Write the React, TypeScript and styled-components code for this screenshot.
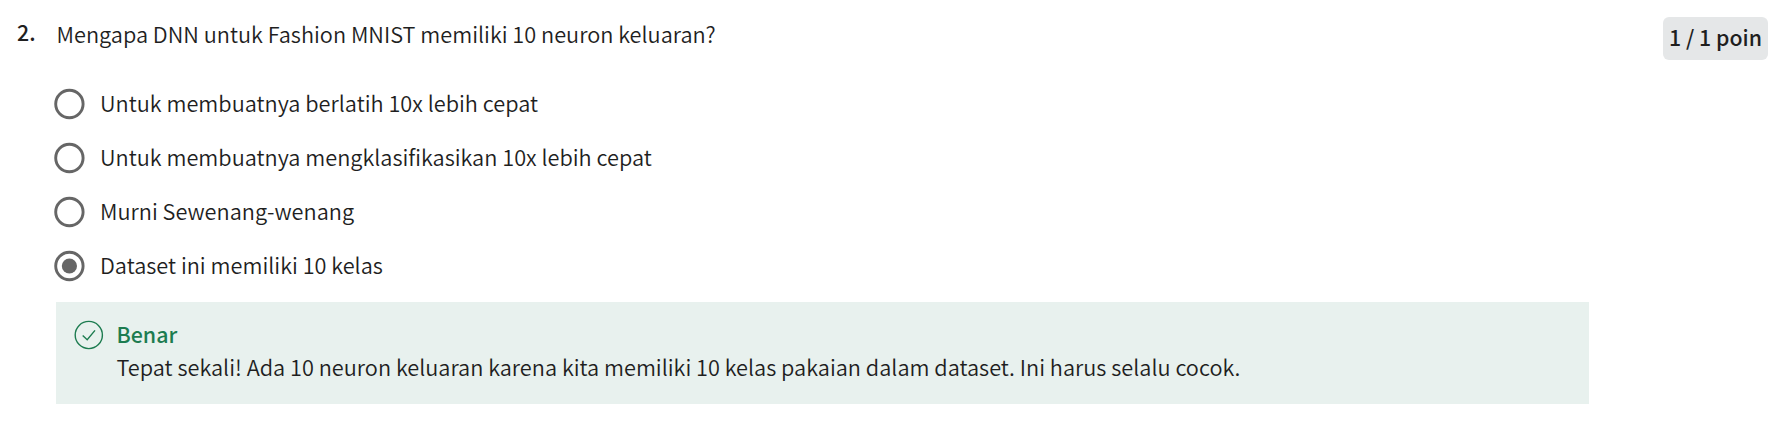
import React from "react";
import styled, { createGlobalStyle } from "styled-components";

const GlobalStyle = createGlobalStyle`
  * { box-sizing: border-box; }
  body {
    margin: 0;
    background: #fff;
    color: #1f1f1f;
    font-family: "Source Sans Pro", "Noto Sans CJK SC", sans-serif;
    font-size: 21.72px;
    font-weight: 350;
    line-height: 33px;
  }
`;

const Page = styled.main`
  display: flex;
  align-items: flex-start;
  height: 428px;
  padding: 17px 8px 0 17px;
`;

const QuestionNumber = styled.div`
  width: 39px;
  flex: none;
  font-size: 21.4px;
  font-weight: 500;
  line-height: 29px;
`;

const Content = styled.section`
  width: 1533px;
  flex: none;
`;

const Prompt = styled.h1`
  margin: 0;
  padding-left: 0.5px;
  font-size: inherit;
  font-weight: inherit;
  line-height: 34px;
  white-space: nowrap;
`;

const Options = styled.div`
  display: flex;
  flex-direction: column;
  margin-top: 26px;
`;

const Option = styled.label`
  display: flex;
  align-items: center;
  gap: 14px;
  height: 54px;
  margin-left: -2px;
`;

const RadioIcon = styled.svg`
  flex: none;
  width: 32px;
  height: 32px;
  color: #666;
`;

function Radio({ checked }: { checked?: boolean }) {
  return (
    <RadioIcon viewBox="0 0 32 32">
      <circle cx="15.4" cy="16" r="13.7" fill="none" stroke="currentColor" strokeWidth="2.9" />
      {checked && <circle cx="15.4" cy="16" r="7.6" fill="currentColor" />}
    </RadioIcon>
  );
}

const OptionLabel = styled.span`
  padding-bottom: 3px;
  white-space: nowrap;
`;

const Feedback = styled.div`
  display: flex;
  gap: 12.5px;
  height: 102px;
  margin-top: 9px;
  padding: 15px 18px;
  background: #e8f1ee;
`;

const CheckIcon = styled.svg`
  flex: none;
  width: 30px;
  height: 30px;
  margin-top: 3px;
  fill: none;
  stroke: #1d7c50;
  stroke-width: 1.4;
`;

const Verdict = styled.div`
  color: #1d7c50;
  font-size: 21.4px;
  font-weight: 500;
`;

const Explanation = styled.div`
  white-space: nowrap;
`;

const Points = styled.div`
  display: flex;
  justify-content: center;
  width: 105px;
  height: 43px;
  margin-left: auto;
  border-radius: 6px;
  background: #e5e7e8;
  font-size: 21.3px;
  font-weight: 500;
  line-height: 40px;
  white-space: nowrap;
`;

const options = [
  { text: "Untuk membuatnya berlatih 10x lebih cepat" },
  { text: "Untuk membuatnya mengklasifikasikan 10x lebih cepat" },
  { text: "Murni Sewenang-wenang" },
  { text: "Dataset ini memiliki 10 kelas", checked: true },
];

export default function App() {
  return (
    <>
      <GlobalStyle />
      <Page>
        <QuestionNumber>2.</QuestionNumber>
        <Content>
          <Prompt>Mengapa DNN untuk Fashion MNIST memiliki 10 neuron keluaran?</Prompt>
          <Options>
            {options.map((o) => (
              <Option key={o.text}>
                <Radio checked={o.checked} />
                <OptionLabel>{o.text}</OptionLabel>
              </Option>
            ))}
          </Options>
          <Feedback>
            <CheckIcon viewBox="0 0 30 30">
              <circle cx="14.8" cy="15" r="13.6" />
              <path d="M8.7 15.4 L13.2 19.7 L21 10.4" />
            </CheckIcon>
            <div>
              <Verdict>Benar</Verdict>
              <Explanation>
                Tepat sekali! Ada 10 neuron keluaran karena kita memiliki 10 kelas pakaian dalam dataset. Ini harus selalu cocok.
              </Explanation>
            </div>
          </Feedback>
        </Content>
        <Points>1 / 1 poin</Points>
      </Page>
    </>
  );
}
